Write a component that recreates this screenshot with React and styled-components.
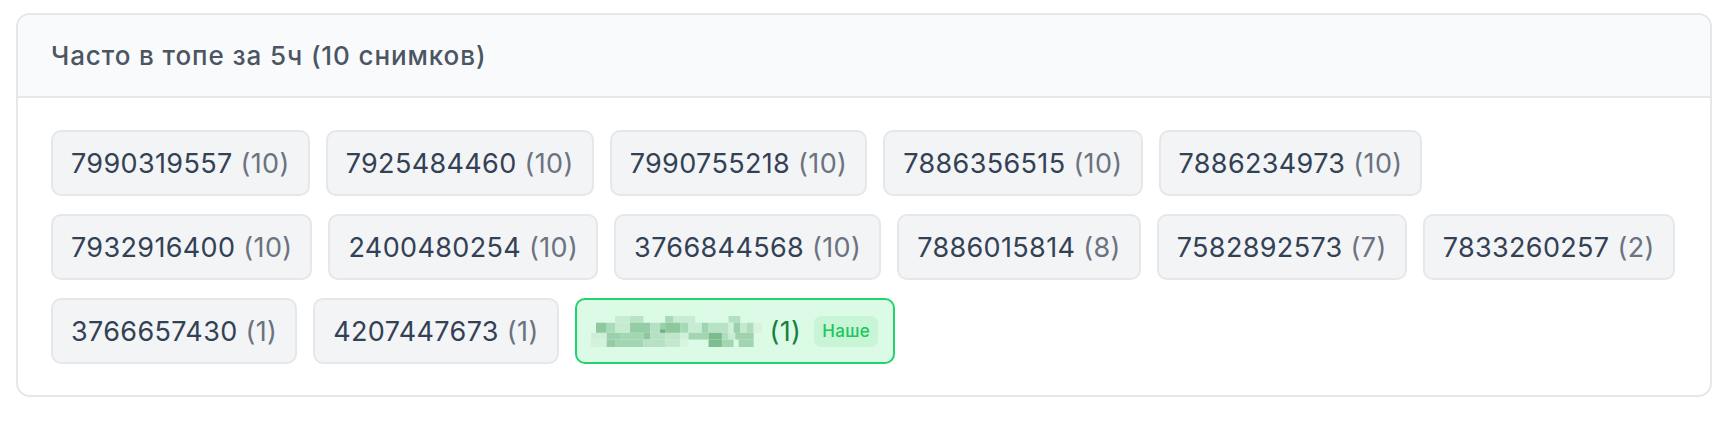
import styled, { createGlobalStyle } from 'styled-components';

const GlobalStyle = createGlobalStyle`
	html, body {
		margin: 0;
		background: #ffffff;
	}
	body {
		font-family: Inter, 'Noto Sans', sans-serif;
	}
`;

const data = [
	{ id: '7990319557', count: 10 },
	{ id: '7925484460', count: 10 },
	{ id: '7990755218', count: 10 },
	{ id: '7886356515', count: 10 },
	{ id: '7886234973', count: 10 },
	{ id: '7932916400', count: 10 },
	{ id: '2400480254', count: 10 },
	{ id: '3766844568', count: 10 },
	{ id: '7886015814', count: 8 },
	{ id: '7582892573', count: 7 },
	{ id: '7833260257', count: 2 },
	{ id: '3766657430', count: 1 },
	{ id: '4207447673', count: 1 },
	{ id: 'ours', count: 1, isOurs: true },
];

// pixelated (censored) id: rows of [y0, y1, [[x0, x1, colour], ...]]
const mosaic = [
	[45, 65, [[150, 195, '#c8ebd3'], [195, 235, '#b9e3c6'], [300, 325, '#a9d9b8'], [325, 390, '#c8ebd3'], [490, 525, '#b3e0c0']]],
	[65, 95, [
		[93, 125, '#8fca9f'], [125, 150, '#a9dbb8'], [150, 195, '#c5ebd1'], [195, 255, '#94cda5'], [255, 285, '#b6e0c3'],
		[285, 300, '#9ad0aa'], [300, 345, '#8cc89c'], [345, 370, '#a8d9b7'], [370, 410, '#c8ecd3'], [410, 430, '#a0d4b0'],
		[430, 490, '#b8e2c5'], [490, 505, '#d0f0da'], [505, 525, '#9ad0aa'], [525, 545, '#c4e9cf'], [545, 565, '#b0dcbe'],
		[565, 590, '#d7f2df'],
	]],
	[85, 100, [[285, 300, '#6fb283']]],
	[95, 115, [
		[78, 125, '#cdeed8'], [125, 165, '#9ad0aa'], [165, 235, '#a5d6b4'], [235, 255, '#8ec79e'], [255, 300, '#b5e0c2'],
		[300, 345, '#bfe6cb'], [345, 370, '#d0f0da'], [370, 430, '#a3d5b2'], [430, 470, '#7cbb8e'], [470, 490, '#b0dcbe'],
		[490, 510, '#c9edd4'], [510, 565, '#9ed3ad'],
	]],
	[115, 137, [
		[78, 125, '#d4f1dd'], [125, 150, '#94cda4'], [150, 235, '#a2d5b1'], [235, 300, '#b7e1c4'], [300, 345, '#c3e8ce'],
		[345, 370, '#d8f4e1'], [430, 470, '#7fbd91'], [470, 505, '#a5d6b4'], [520, 565, '#a1d4b0'],
	]],
];

const Page = styled.div`
	padding: 13px 16px 25px;
`;

const Card = styled.section`
	border: 2px solid #e5e7eb;
	border-radius: 14px;
	overflow: hidden;
	background: #ffffff;
`;

const CardHeader = styled.header`
	display: flex;
	align-items: center;
	height: 81px;
	padding: 0 33px;
	background: #f9fafb;
	border-bottom: 2px solid #e5e7eb;

	h3 {
		margin: 0;
		color: #4b5563;
		font-size: 26px;
		font-weight: 500;
		letter-spacing: 0.9px;
	}
`;

const ChipList = styled.div`
	display: flex;
	flex-wrap: wrap;
	gap: 18px 16px;
	padding: 32px 33px 31px;
`;

const Chip = styled.div`
	display: flex;
	align-items: center;
	height: 66px;
	box-sizing: border-box;
	padding: ${({ $ours }) => ($ours ? '0 15px 0 14px' : '0 18px')};
	border: 2px solid ${({ $ours }) => ($ours ? '#22d36b' : '#e5e7eb')};
	border-radius: 10px;
	background: ${({ $ours }) => ($ours ? '#dcfbe6' : '#f3f4f6')};
	color: #334155;
	font-size: 27px;
	letter-spacing: 0.35px;
	white-space: pre;
`;

const Count = styled.span`
	color: ${({ $ours }) => ($ours ? '#15803d' : '#6b7280')};
`;

const Badge = styled.span`
	display: inline-flex;
	align-items: center;
	height: 31px;
	margin-left: 13px;
	padding: 0 8px;
	border-radius: 7px;
	background: #c7f5d6;
	color: #22c55e;
	font-size: 17px;
	font-weight: 500;
	letter-spacing: 0.3px;
`;

const Mosaic = () => (
	<svg width="171" height="31" viewBox="78 45 512 92" preserveAspectRatio="none">
		{mosaic.map(([y0, y1, cells]) =>
			cells.map(([x0, x1, fill]) => (
				<rect key={`${y0}-${x0}`} x={x0} y={y0} width={x1 - x0} height={y1 - y0} fill={fill} />
			)),
		)}
	</svg>
);

export default function App() {
	return (
		<>
			<GlobalStyle />
			<Page>
				<Card>
					<CardHeader>
						<h3>Часто в топе за 5ч (10 снимков)</h3>
					</CardHeader>
					<ChipList>
						{data.map(({ id, count, isOurs }) =>
							isOurs ? (
								<Chip key={id} $ours>
									<Mosaic />
									<Count $ours> ({count})</Count>
									<Badge>Наше</Badge>
								</Chip>
							) : (
								<Chip key={id}>
									{id}
									<Count> ({count})</Count>
								</Chip>
							),
						)}
					</ChipList>
				</Card>
			</Page>
		</>
	);
}
